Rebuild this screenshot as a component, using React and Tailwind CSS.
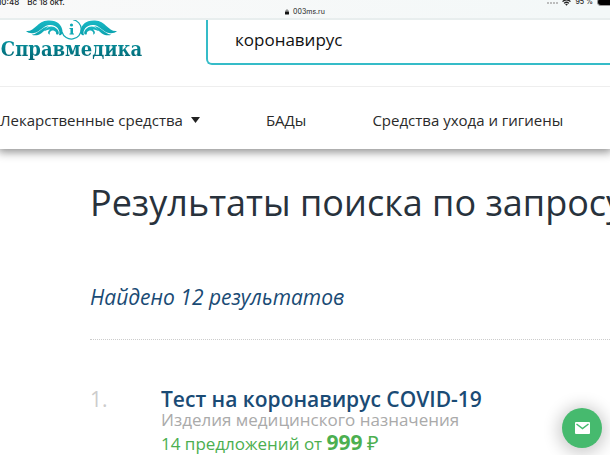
import React from "react";

function StatusBar() {
  return (
    <div className="relative z-10 flex h-[20px] flex-col border-b-2 border-[#e8eeee] bg-gradient-to-r from-[#f9f9f9] to-[#f3f8f8] font-['Inter','Liberation_Sans',sans-serif] text-[7px] leading-[10px] text-[#222]">
      <div className="-mt-[3px] flex h-[10px] items-center justify-between">
        <div className="-ml-0.5 flex gap-2 text-[8px] font-medium">
          <span>10:48</span>
          <span>Вс 18 окт.</span>
        </div>
        <div className="flex items-center gap-1">
          <span className="flex gap-px pt-0.5">
            <i className="size-[2px] rounded-full bg-[#aaa]" />
            <i className="size-[2px] rounded-full bg-[#aaa]" />
            <i className="size-[2px] rounded-full bg-[#aaa]" />
            <i className="size-[2px] rounded-full bg-[#aaa]" />
          </span>
          <svg className="h-[7px] w-[9px]" viewBox="0 0 20 16" fill="none" stroke="#222" strokeWidth="3">
            <path d="M1 6Q10 -2 19 6M4.500 10Q10 5 15.500 10" />
            <path d="M7 12Q10 9.500 13 12L10 15.500Z" fill="#222" stroke="none" />
          </svg>
          <span className="font-medium">95 %</span>
          <span className="h-[8px] w-[13px] rounded-l-sm border border-r-0 border-[#999] bg-black" />
        </div>
      </div>
      <div className="flex items-center justify-center gap-1">
        <svg className="h-[6px] w-[4px]" viewBox="0 0 10 13">
          <rect y="5.500" width="10" height="7.500" rx="1.500" fill="#111" />
          <path d="M2.500 6V3.500a2.500 2.500 0 0 1 5 0V6" fill="none" stroke="#111" strokeWidth="1.500" />
        </svg>
        <span>003ms.ru</span>
      </div>
    </div>
  );
}

function Logo() {
  return (
    <a href="#" className="-mt-px flex w-[143px] flex-col items-center">
      <svg className="h-[21px] w-[94px]" viewBox="0 0 94 21">
        <defs>
          <linearGradient id="teal" x1="0" y1="0" x2="0" y2="1">
            <stop offset="0" stopColor="#19b9c6" />
            <stop offset="1" stopColor="#0aa0ac" />
          </linearGradient>
          <g id="wing" fill="url(#teal)">
            <path d="M1 12C10 13 12 2 23 1.500C32 1 37 6 37.500 12C37.500 15 36 17 34 16C36 11 31 5 24 6C18 7 15 13 9 14C6 14.500 3 14 1 12Z" />
            <path d="M7 15.500C13 15.500 16 8 24 7C21 9 18 14.500 13 16C11 16.600 8 16.500 7 15.500Z" />
            <path d="M19 12C22 7 28 6 32 10C35 13 34 17 31 15C32 13 29 11 27 11.500C25 12 24 14 25 15.500C22 15 23 12 25 10.500C22 10.500 21 12 19 12Z" />
          </g>
        </defs>
        <use href="#wing" />
        <use href="#wing" transform="translate(93 0) scale(-1 1)" />
        <path d="M48 0.700A9.700 9.700 0 0 1 56.200 10A9.800 9.800 0 0 1 37 13" fill="none" stroke="#0fa8b4" strokeWidth="1.200" />
        <circle cx="46.500" cy="6" r="1.600" fill="#0fa8b4" />
        <path d="M44.500 9H48V14.500H49V15.500H44.500V14.500H45.500V10H44.500Z" fill="#0fa8b4" />
      </svg>
      <span className="bg-gradient-to-b from-[#0795a1] to-[#02606e] bg-clip-text pb-1 font-['DejaVu_Serif_Condensed','DejaVu_Serif',serif] text-[20px] leading-[18px] font-bold text-transparent">
        Справмедика
      </span>
    </a>
  );
}

export default function App() {
  return (
    <div className="relative overflow-hidden bg-white font-['Open_Sans','Noto_Sans',sans-serif] text-[#222]">
      <StatusBar />
      <header className="shadow-[0_1px_9px_2px_rgba(0,0,0,0.45)]">
        <div className="flex h-[67px] items-start gap-[63px] border-b border-[#eee]">
          <Logo />
          <input
            type="text"
            aria-label="Поиск"
            defaultValue="коронавирус"
            className="h-[45px] min-w-0 flex-1 rounded-bl-md border-b-2 border-l-2 border-[#35bcc8] pb-1 pl-[27px] text-[17px] text-[#111] outline-none"
          />
        </div>
        <nav className="flex h-[62px] items-center gap-[66px] pt-1 text-[15px] leading-6 whitespace-nowrap text-[#2a2a2a]">
          <a href="#" className="flex items-center gap-2">
            Лекарственные средства
            <svg className="h-[6px] w-[9px]" viewBox="0 0 9 6">
              <path d="M0 0H9L4.500 6Z" fill="#222" />
            </svg>
          </a>
          <a href="#">БАДы</a>
          <a href="#">Средства ухода и гигиены</a>
        </nav>
      </header>
      <main className="pt-7 pl-[90px]">
        <h1 className="text-[36px] leading-[52px] whitespace-nowrap text-[#28323c]">Результаты поиска по запросу</h1>
        <p className="mt-12 text-[21px] leading-[40px] text-[#1a4b75] italic">Найдено 12 результатов</p>
        <hr className="mt-[22px] border-0 border-t border-dotted border-[#ccc]" />
        <ol className="pt-[46px]">
          <li className="flex whitespace-nowrap">
            <span className="w-[71px] text-[21px] leading-[26px] text-[#ccc]">1.</span>
            <div>
              <a href="#" className="block text-[21px] leading-[26px] font-semibold text-[#1a4b75]">
                Тест на коронавирус COVID-19
              </a>
              <p className="text-[17px] leading-[16px] text-[#aaa]">Изделия медицинского назначения</p>
              <p className="text-[17px] leading-[28px] text-[#4caf50]">
                14 предложений от <b className="text-[21px]">999</b> <span className="text-[20px]">₽</span>
              </p>
            </div>
          </li>
        </ol>
      </main>
      <button
        type="button"
        aria-label="Написать сообщение"
        className="fixed right-2 bottom-[7px] flex size-[40px] items-center justify-center rounded-full bg-[#46ba6e] shadow-[0_2px_16px_4px_rgba(0,0,0,0.2)]"
      >
        <svg className="h-[12px] w-[15px]" viewBox="0 0 15 12">
          <rect width="15" height="12" rx="1" fill="#fff" />
          <path d="M1.500 2L7.500 6.500L13.500 2" fill="none" stroke="#46ba6e" strokeWidth="1.500" />
        </svg>
      </button>
    </div>
  );
}
